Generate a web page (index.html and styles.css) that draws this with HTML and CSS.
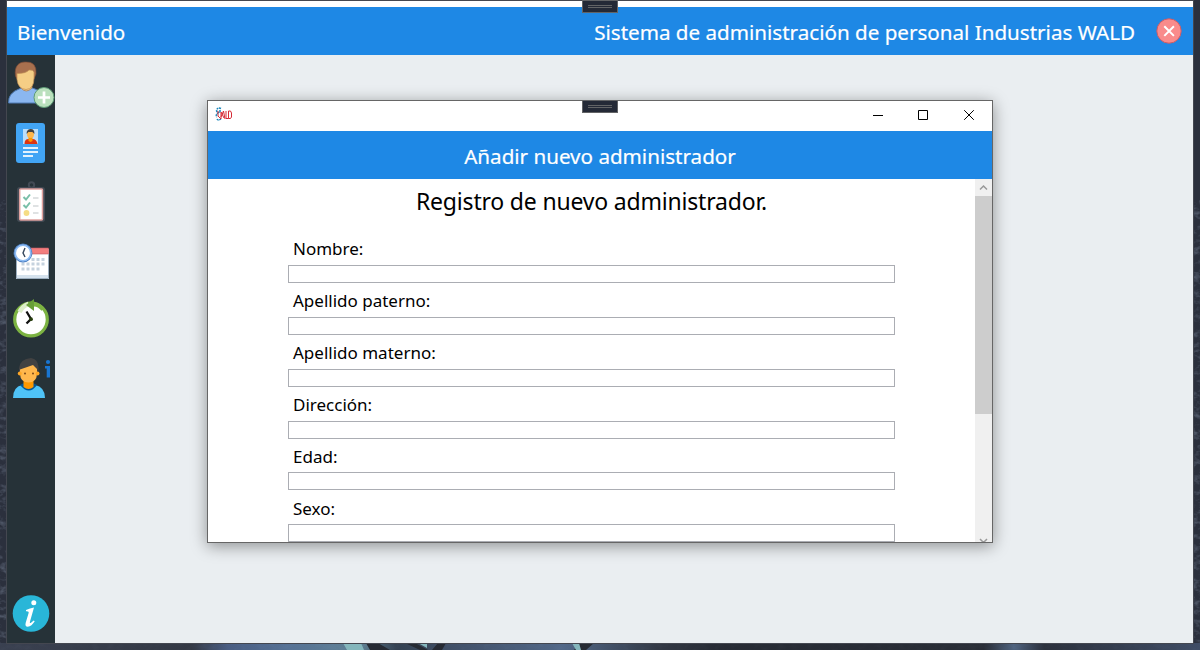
FILE: index.html
```
<!DOCTYPE html>
<html lang="es">
<head>
<meta charset="utf-8">
<title>Sistema de administración de personal</title>
<link rel="stylesheet" href="styles.css">
</head>
<body>
<div class="desktop">
  <svg class="wallpaper" viewBox="0 0 1200 650" aria-hidden="true">
    <defs>
      <filter id="grain" x="0" y="0" width="100%" height="100%">
        <feTurbulence type="fractalNoise" baseFrequency="0.13 0.2" numOctaves="3" seed="7"/>
        <feColorMatrix values="0 0 0 0 0.36  0 0 0 0 0.44  0 0 0 0 0.58  2.6 0 0 0 -1.2"/>
      </filter>
      <linearGradient id="glow" gradientUnits="userSpaceOnUse" x1="0" y1="0" x2="1200" y2="0">
        <stop offset="0" stop-color="#3b4252"/><stop offset=".16" stop-color="#343945"/><stop offset=".19" stop-color="#4d628a"/>
        <stop offset=".24" stop-color="#5a789e"/><stop offset=".3" stop-color="#668a9e"/><stop offset=".33" stop-color="#344253"/>
        <stop offset=".38" stop-color="#44546e"/><stop offset=".47" stop-color="#566e90"/><stop offset=".55" stop-color="#333945"/>
        <stop offset=".6" stop-color="#262a33"/><stop offset=".82" stop-color="#292d36"/><stop offset=".845" stop-color="#526785"/>
        <stop offset=".87" stop-color="#2b303c"/><stop offset="1" stop-color="#42506a"/>
      </linearGradient>
    </defs>
    <path filter="url(#grain)" opacity=".3" d="M0 200H1200V650H0z"/>
    <path fill="url(#glow)" opacity=".9" d="M0 643H1200V650H0z"/>
    <path fill="#262a33" d="M366 643h12l12 7h-20zM405 643h10l13 7h-8zM438 643h8l-4 7h-10zM580 643h14l-8 7h-12z"/>
    <path fill="#84b6bc" d="M343 643h18l3 7h-17zM418 643h9v5zM572 643h7l2 7h-5z"/>
  </svg>
  <div class="app">
    <div class="app-strip"></div>
    <header class="app-header">
      <span class="welcome">Bienvenido</span>
      <span class="system">Sistema de administración de personal Industrias WALD</span>
      <svg class="exit" viewBox="0 0 26 26"><circle cx="13" cy="13" r="12.2" fill="#f98b8b" stroke="#cb5c66"/><path d="M8.3 8.3l9.6 9.6M17.9 8.3l-9.6 9.6" stroke="#fff" stroke-width="2"/></svg>
    </header>
    <div class="app-body">
      <nav class="sidebar">
        <svg viewBox="0 0 48 59">
          <path d="M1.600 48Q1 38 12 34l8-3 8 3q9 3 10 14z" fill="#8bb7f0" stroke="#4e7ab5"/>
          <path d="M14 28v5q5 6 11 0v-5z" fill="#f2c882" stroke="#a7794c" stroke-width=".7"/>
          <path d="M8.500 21C7 11 12 7 18 7q12-1 11 12l-2 5H10z" fill="#a8704e" stroke="#7d4c37" stroke-width=".7"/>
          <path d="M10 18.500q9 0 12-3.500 4-.5 5 2v6q0 11-8 11.500-8-.5-9-10z" fill="#f5ce85" stroke="#bf8e53" stroke-width=".7"/>
          <circle cx="37" cy="42.500" r="10" fill="#bae0bd" stroke="#5e9c76"/><path d="M37 36.500v12M31 42.500h12" stroke="#fff" stroke-width="2.700"/>
        </svg>
        <svg viewBox="0 0 48 59">
          <rect x="9" y="9" width="29" height="40" rx="3" fill="#42a5f5"/><path d="M16 15h15v15H16z" fill="#bbdefb"/>
          <path d="M17.500 30q0-5 4-5h4q4 0 5 5z" fill="#dd3510"/><path d="M21.500 23h4v4l-2 1-2-1z" fill="#ff9800"/><circle cx="23.500" cy="20.500" r="3.500" fill="#ffb74d"/><path d="M19.700 20v-2q1-3 4-3 4 0 3.700 5l-2-2h-4z" fill="#424242"/>
          <path d="M16 34h15M16 38h15M16 42h10" stroke="#e3f2fd" stroke-width="2"/>
        </svg>
        <svg viewBox="0 0 48 59">
          <circle cx="24.500" cy="12" r="2.700" fill="none" stroke="#424a54" stroke-width="2"/><rect x="10" y="14" width="28" height="35" rx="3" fill="#424a54"/>
          <rect x="12.700" y="16" width="22.800" height="31" rx="1" fill="#fff" stroke="#e0a19e" stroke-width="1.500"/>
          <path d="M16.500 24l2.500 2.500 4-5M16.500 32l2.500 2.500 4-5" fill="none" stroke="#78bfa8" stroke-width="2"/><circle cx="19.500" cy="40" r="2.900" fill="#f5dd84"/><path d="M26 25h5.500M26 33h5.500M26 40h5.500" stroke="#dfe2e3" stroke-width="2"/>
        </svg>
        <svg viewBox="0 0 48 59">
          <path d="M9 17h33v30H9z" fill="#fff"/><path d="M9 43h33v3.500H9z" fill="#d5e2ed"/><path d="M9 16h32.500v6H9z" fill="#f37e7e" stroke="#bf5962" stroke-width=".6"/><path d="M9.500 20v26.500H41.500V22" fill="none" stroke="#9dafbf"/>
          <path d="M24.500 27.500h13M14.500 32h23M14.500 37h18" stroke="#c5d2de" stroke-width="2.800" stroke-dasharray="3 2"/>
          <circle cx="16" cy="21" r="8.800" fill="#fff" stroke="#4f83c6" stroke-width="1.200"/><circle cx="16" cy="21" r="7.700" fill="none" stroke="#8abaf3" stroke-width="1.500"/><path d="M18 16l-2 5 2 4" fill="none" stroke="#35475c" stroke-width="1.400"/>
        </svg>
        <svg viewBox="0 0 48 59">
          <circle cx="24" cy="28.500" r="16.300" fill="#fff" stroke="#7cb342" stroke-width="3.200"/>
          <path d="M12.500 21q3-6 9-8" fill="none" stroke="#dcedc8" stroke-width="4.500"/><path d="M27 8v12l-8-6z" fill="#689f38"/><path d="M27 13.500q5 0 9 5" fill="none" stroke="#7cb342" stroke-width="4"/>
          <path d="M19.500 20.500l4.500 7.500-4.500 4.500" fill="none" stroke="#111" stroke-width="2.300"/><circle cx="24" cy="28.200" r="1.900" fill="#263d0c"/>
        </svg>
        <svg viewBox="0 0 48 59">
          <path d="M6 48q0-11 9-13h13q10 2 10 13z" fill="#4fc3f7"/><path d="M13 35q9 11 17 0l-4-2h-9z" fill="#01579b"/><path d="M16.500 30h10v7q-5 4-10 0z" fill="#ff9800"/>
          <path d="M12 24v-6q1-9 12-10 7 1 7.500 9v7z" fill="#424242"/><path d="M13 19.500l13-4.500 4 4v5q-.5 8.500-8.500 8.500T13 24z" fill="#ffb74d"/><circle cx="12.800" cy="23.500" r="2" fill="#ffa726"/><circle cx="30.500" cy="23.500" r="2" fill="#ffa726"/><circle cx="18" cy="23.500" r="1" fill="#784719"/><circle cx="26" cy="23.500" r="1" fill="#784719"/>
          <circle cx="41" cy="12" r="2.100" fill="#1976d2"/><path d="M38 16h5v11.500h-3.300V18.500H38z" fill="#1976d2"/>
        </svg>
        <svg class="about" viewBox="0 0 48 59">
          <circle cx="24" cy="29.500" r="18.300" fill="#29b6d8"/><circle cx="26.800" cy="18.800" r="2.500" fill="#fff"/><path d="M19 26q4-2 8-2.500l-4 14q-.6 2 .7 1.500l3-2.500 1 .8q-3 5-7 5.500-3 0-2-4l3-10q.5-2-2.700-1.600z" fill="#fff"/>
        </svg>
      </nav>
      <main class="workspace"></main>
    </div>
    <div class="grip grip-app"></div>
  </div>

  <section class="dialog">
    <div class="titlebar">
      <svg class="brand" viewBox="0 0 18 16"><path d="M6 1.500Q3 0 1.500 3q0 2 2 2.500Q0 8 2 10M2 12q1 2 4 0M5 3v2" fill="none" stroke="#1785bb" stroke-width="1.500" stroke-dasharray="2 .7"/><path d="M3 4v5l3 3V5l3 6M6 10l2.500-6 1.500 8M11 4v7.500h2.500M13.500 4v7.500M13.500 4h2l1 2v4l-1 1.500h-2" fill="none" stroke="#d52b36" stroke-width="1"/></svg>
      <svg class="controls" viewBox="0 0 138 30" fill="none" stroke="#000"><path d="M18 14.500h10M63.500 9.500h9v9h-9zM109.200 9.200l9.600 9.600M118.800 9.200l-9.600 9.600"/></svg>
    </div>
    <h1 class="dialog-header">Añadir nuevo administrador</h1>
    <div class="dialog-body">
      <form class="form">
        <h2 class="form-title">Registro de nuevo administrador.</h2>
        <div class="field"><label>Nombre:</label><input class="box"></div>
        <div class="field"><label>Apellido paterno:</label><input class="box"></div>
        <div class="field"><label>Apellido materno:</label><input class="box"></div>
        <div class="field"><label>Dirección:</label><input class="box"></div>
        <div class="field"><label>Edad:</label><input class="box"></div>
        <div class="field"><label>Sexo:</label><input class="box"></div>
      </form>
      <div class="scrollbar">
        <svg class="arrow" viewBox="0 0 17 17"><path d="M5 10.500L8.500 7l3.500 3.500" fill="none" stroke="#999" stroke-width="1.500"/></svg>
        <div class="thumb"></div>
        <svg class="arrow arrow-down" viewBox="0 0 17 17"><path d="M5 8l3.500 3.500L12 8" fill="none" stroke="#999" stroke-width="1.500"/></svg>
      </div>
    </div>
    <div class="grip grip-dialog"></div>
  </section>
</div>
</body>
</html>
```
FILE: styles.css
```
* { box-sizing: border-box; }
body { margin: 0; font-family: "Noto Sans", "Open Sans", sans-serif; overflow: hidden; }
svg { display: block; }
.desktop { position: relative; width: 1200px; height: 650px; padding: 1px 7px 7px; background: #2b303d; overflow: hidden; }
.wallpaper { position: absolute; left: 0; top: 0; width: 1200px; height: 650px; }
.app { position: relative; width: 1186px; height: 642px; display: flex; flex-direction: column; outline: 1px solid #444750; }
.app-strip { height: 6px; background: #fff; }
.app-header { height: 48px; background: #1e88e5; color: #fff; display: flex; align-items: center; padding: 0 11px 0 10px; font-size: 20.6px; line-height: 48px; -webkit-text-stroke: .2px #fff; white-space: nowrap; }
.welcome { margin-right: auto; padding-top: 2px; }
.system { padding-top: 2px; }
.exit { width: 26px; height: 26px; margin-left: 21px; }
.app-body { flex: 1; display: flex; }
.sidebar { width: 48px; background: #263238; display: flex; flex-direction: column; }
.sidebar svg { width: 48px; height: 59px; flex: none; }
.sidebar .about { margin-top: auto; }
.workspace { flex: 1; background: #eaeef1; }
.grip { position: absolute; width: 36px; height: 13px; background: #242936; border: 1px solid #626365; }
.grip::after { content: ""; display: block; width: 24px; height: 1px; margin: 4px auto 0; border: solid #626365; border-width: 1px 0; }
.grip-app { left: 575px; top: -1px; }
.grip-dialog { left: 374px; top: -1px; }
.dialog { position: absolute; left: 207px; top: 100px; width: 786px; height: 443px; border: 1px solid #666; background: #fff; box-shadow: 0 3px 15px rgba(0,0,0,.4); }
.titlebar { height: 30px; display: flex; justify-content: space-between; }
.brand { width: 18px; height: 16px; margin: 6px 0 0 7px; }
.controls { width: 138px; height: 30px; margin-right: -1px; }
.dialog-header { margin: 0; height: 48px; padding-top: 1px; background: #1e88e5; color: #fff; font-size: 20.6px; line-height: 48px; font-weight: 400; -webkit-text-stroke: .2px #fff; text-align: center; }
.dialog-body { height: 363px; display: flex; overflow: hidden; }
.form { width: 767px; padding: 0 80px; }
.form-title { margin: 0; height: 55px; font-size: 23px; font-weight: 400; line-height: 44px; letter-spacing: -.19px; text-align: center; white-space: nowrap; }
.field { height: 51.85px; display: flex; flex-direction: column; }
label { height: 31px; flex: none; padding: .4px 0 0 5px; font-size: 17px; line-height: 30px; white-space: nowrap; }
.box { width: 607px; height: 18px; flex: none; padding: 0; border: 1px solid #abadb3; background: #fff; outline: 0; }
.scrollbar { width: 17px; background: #f0f0f0; overflow: hidden; }
.arrow { width: 17px; height: 17px; }
.thumb { height: 218px; background: #cdcdcd; }
.arrow-down { margin-top: 117px; }
```
